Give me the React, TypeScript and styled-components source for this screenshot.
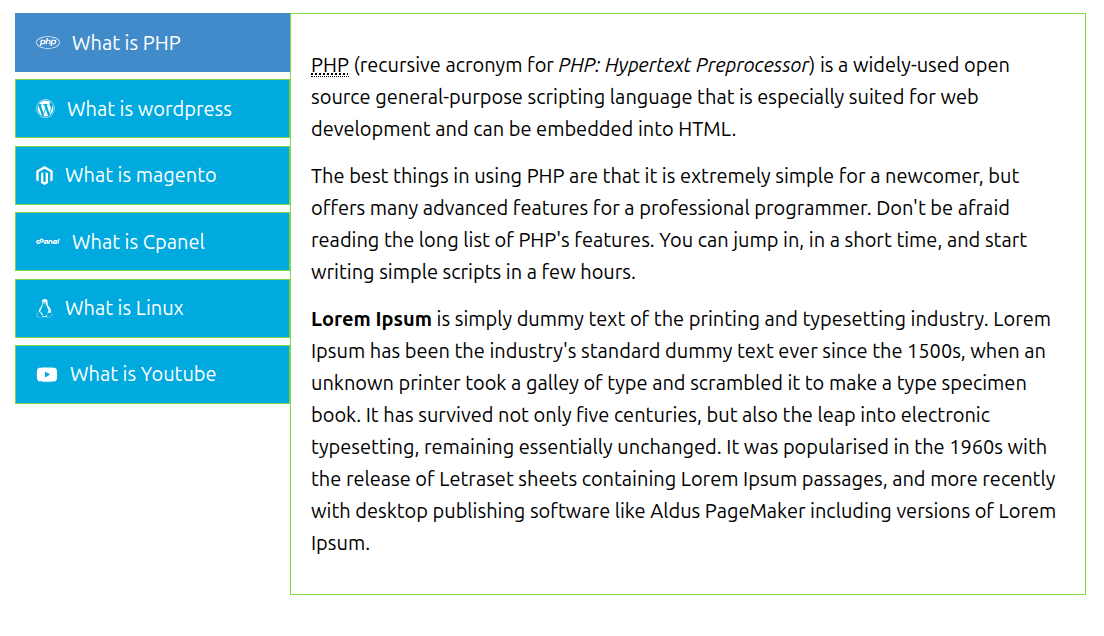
import React, { useState } from "react";
import styled, { createGlobalStyle } from "styled-components";
import { FaPhp, FaWordpress, FaMagento, FaCpanel, FaLinux, FaYoutube } from "react-icons/fa";
import type { IconType } from "react-icons";

const GlobalStyle = createGlobalStyle`
  *, *::before, *::after { box-sizing: border-box; }
  body {
    margin: 0;
    background: #fff;
    color: #000;
    font-family: Ubuntu, "Noto Sans", sans-serif;
    font-size: 20px;
    line-height: 32px;
  }
`;

const Page = styled.main`
  display: flex;
  align-items: flex-start;
  padding: 13px 18px 13px 15px;
`;

const TabList = styled.div`
  display: flex;
  flex: 0 0 275px;
  flex-direction: column;
  justify-content: space-between;
  min-height: 391px;
`;

const Tab = styled.button<{ $active: boolean; $iconWidth: number }>`
  display: flex;
  align-items: center;
  gap: 12px;
  height: 59px;
  padding: 0 20px;
  border: 1px solid ${(p) => (p.$active ? "#428bca" : "#7fd643")};
  background: ${(p) => (p.$active ? "#428bca" : "#00aade")};
  color: #fff;
  font: inherit;
  text-align: left;
  cursor: pointer;

  svg {
    flex: none;
    width: ${(p) => p.$iconWidth}px;
    height: 19px;
  }
`;

const Panel = styled.section`
  flex: 1;
  min-width: 0;
  padding: 35px 20px;
  border: 1px solid #7fd643;
`;

const Paragraph = styled.p`
  margin: 0 0 15px;

  &:last-child {
    margin-bottom: 0;
  }
`;

const Acronym = styled.abbr`
  border-bottom: 1px dotted #000;
  text-decoration: underline dotted;
`;

const tabs: { id: string; label: string; Icon: IconType; iconWidth: number }[] = [
  { id: "php", label: "What is PHP", Icon: FaPhp, iconWidth: 24 },
  { id: "wordpress", label: "What is wordpress", Icon: FaWordpress, iconWidth: 19 },
  { id: "magento", label: "What is magento", Icon: FaMagento, iconWidth: 17 },
  { id: "cpanel", label: "What is Cpanel", Icon: FaCpanel, iconWidth: 24 },
  { id: "linux", label: "What is Linux", Icon: FaLinux, iconWidth: 17 },
  { id: "youtube", label: "What is Youtube", Icon: FaYoutube, iconWidth: 22 },
];

export default function App() {
  const [active, setActive] = useState("php");

  return (
    <>
      <GlobalStyle />
      <Page>
        <TabList role="tablist" aria-orientation="vertical">
          {tabs.map(({ id, label, Icon, iconWidth }) => (
            <Tab
              key={id}
              id={`tab-${id}`}
              type="button"
              role="tab"
              aria-selected={active === id}
              aria-controls="panel"
              $active={active === id}
              $iconWidth={iconWidth}
              onClick={() => setActive(id)}
            >
              <Icon aria-hidden />
              {label}
            </Tab>
          ))}
        </TabList>
        <Panel id="panel" role="tabpanel" aria-labelledby={`tab-${active}`}>
          <Paragraph>
            <Acronym title="PHP: Hypertext Preprocessor">PHP</Acronym> (recursive acronym for{" "}
            <em>PHP: Hypertext Preprocessor</em>) is a widely-used open source general-purpose
            scripting language that is especially suited for web development and can be embedded
            into HTML.
          </Paragraph>
          <Paragraph>
            The best things in using PHP are that it is extremely simple for a newcomer, but offers
            many advanced features for a professional programmer. Don't be afraid reading the long
            list of PHP's features. You can jump in, in a short time, and start writing simple
            scripts in a few hours.
          </Paragraph>
          <Paragraph>
            <strong>Lorem Ipsum</strong> is simply dummy text of the printing and typesetting
            industry. Lorem Ipsum has been the industry's standard dummy text ever since the 1500s,
            when an unknown printer took a galley of type and scrambled it to make a type specimen
            book. It has survived not only five centuries, but also the leap into electronic
            typesetting, remaining essentially unchanged. It was popularised in the 1960s with the
            release of Letraset sheets containing Lorem Ipsum passages, and more recently with
            desktop publishing software like Aldus PageMaker including versions of Lorem Ipsum.
          </Paragraph>
        </Panel>
      </Page>
    </>
  );
}
